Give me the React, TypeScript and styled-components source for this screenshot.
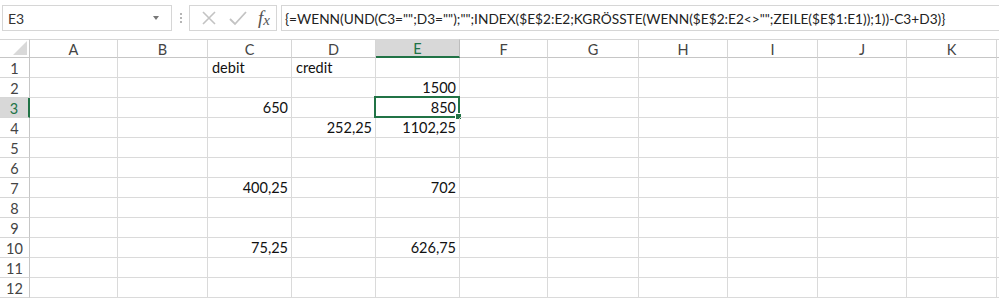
import React from 'react';
import styled, { createGlobalStyle, css } from 'styled-components';

const GlobalStyle = createGlobalStyle`
  html, body {
    margin: 0;
    padding: 0;
    background: #ffffff;
  }
  body {
    font-family: Lato, 'Open Sans', sans-serif;
    color: #222;
  }
`;

const COLS = ['A', 'B', 'C', 'D', 'E', 'F', 'G', 'H', 'I', 'J', 'K'];
const WIDTHS = [88, 90, 84, 84, 84, 88, 91, 89, 90, 89, 90];
const ROWS = 12;

// cell contents by row/column
const DATA: Record<string, { text: string; align: 'left' | 'right' }> = {
  '1C': { text: 'debit', align: 'left' },
  '1D': { text: 'credit', align: 'left' },
  '2E': { text: '1500', align: 'right' },
  '3C': { text: '650', align: 'right' },
  '3E': { text: '850', align: 'right' },
  '4D': { text: '252,25', align: 'right' },
  '4E': { text: '1102,25', align: 'right' },
  '7C': { text: '400,25', align: 'right' },
  '7E': { text: '702', align: 'right' },
  '10C': { text: '75,25', align: 'right' },
  '10E': { text: '626,75', align: 'right' },
};

const FORMULA =
  '{=WENN(UND(C3="";D3="");"";INDEX($E$2:E2;KGRÖSSTE(WENN($E$2:E2<>"";ZEILE($E$1:E1));1))-C3+D3)}';

const App: React.FC = () => {
  return (
    <>
      <GlobalStyle />
      <Page>
        <Toolbar>
          <NameBox>
            <span>E3</span>
            <DropArrow />
          </NameBox>
          <Dots>
            <i />
            <i />
            <i />
          </Dots>
          <ActionBox>
            <svg width="18" height="18" viewBox="0 0 18 18">
              <path d="M3 3 L15 15 M15 3 L3 15" stroke="#c3c3c3" strokeWidth="1.6" fill="none" />
            </svg>
            <svg width="20" height="18" viewBox="0 0 20 18">
              <path d="M2 10 L7 15 L18 3" stroke="#c3c3c3" strokeWidth="1.8" fill="none" />
            </svg>
            <Fx>
              f<sub>x</sub>
            </Fx>
          </ActionBox>
          <FormulaBox>{FORMULA}</FormulaBox>
        </Toolbar>

        <Sheet>
          <Corner>
            <svg width="14" height="14" viewBox="0 0 14 14">
              <polygon points="14,0 14,14 0,14" fill="#d9d9d9" />
            </svg>
          </Corner>
          {COLS.map((c) => (
            <ColHeader key={c} $selected={c === 'E'}>
              {c}
            </ColHeader>
          ))}
          <Filler $header />
          {Array.from({ length: ROWS }, (_, i) => i + 1).map((r) => (
            <React.Fragment key={r}>
              <RowHeader $selected={r === 3}>{r}</RowHeader>
              {COLS.map((c) => {
                const d = DATA[`${r}${c}`];
                const active = r === 3 && c === 'E';
                return (
                  <Cell key={c} $align={d?.align || 'left'}>
                    {d?.text}
                    {active && (
                      <Selection>
                        <Handle />
                      </Selection>
                    )}
                  </Cell>
                );
              })}
              <Filler />
            </React.Fragment>
          ))}
        </Sheet>
      </Page>
    </>
  );
};

const Page = styled.div`
  width: 999px;
  height: 300px;
  overflow: hidden;
  background: #ffffff;
`;

const Toolbar = styled.div`
  height: 39px;
  display: flex;
  align-items: flex-start;
  padding-top: 5px;
  box-sizing: border-box;
`;

const NameBox = styled.div`
  width: 170px;
  height: 26px;
  margin-left: 2px;
  border: 1px solid #d6d6d6;
  box-sizing: border-box;
  display: flex;
  align-items: center;
  justify-content: space-between;
  padding: 0 12px 0 5px;
  font-size: 14px;
  color: #333;
`;

const DropArrow = styled.span`
  width: 0;
  height: 0;
  border-left: 3px solid transparent;
  border-right: 3px solid transparent;
  border-top: 4px solid #777;
`;

const Dots = styled.div`
  width: 17px;
  display: flex;
  flex-direction: column;
  align-items: center;
  justify-content: center;
  gap: 2px;
  height: 26px;

  i {
    width: 2px;
    height: 2px;
    background: #b5b5b5;
  }
`;

const ActionBox = styled.div`
  width: 88px;
  height: 26px;
  border: 1px solid #d6d6d6;
  box-sizing: border-box;
  display: flex;
  align-items: center;
  justify-content: space-between;
  padding: 0 6px 0 10px;
`;

const Fx = styled.span`
  font-family: 'Liberation Serif', 'DejaVu Serif', serif;
  font-style: italic;
  font-size: 19px;
  color: #555;
  line-height: 1;

  sub {
    font-size: 15px;
    vertical-align: -1px;
  }
`;

const FormulaBox = styled.div`
  flex: 1;
  height: 26px;
  margin-left: 4px;
  border: 1px solid #d6d6d6;
  border-right: none;
  box-sizing: border-box;
  display: flex;
  align-items: center;
  padding-left: 3px;
  font-size: 13.7px;
  color: #222;
  white-space: nowrap;
  overflow: hidden;
`;

const Sheet = styled.div`
  display: grid;
  grid-template-columns: 30px ${WIDTHS.map((w) => `${w}px`).join(' ')} 1fr;
  grid-template-rows: 19px;
  grid-auto-rows: 20px;
  font-size: 14.5px;
`;

const headerBase = css`
  box-sizing: border-box;
  display: flex;
  align-items: center;
  justify-content: center;
  color: #444;
  background: #ffffff;
`;

const Corner = styled.div`
  ${headerBase};
  border-right: 1px solid #c6c6c6;
  border-bottom: 1px solid #c6c6c6;
  border-top: 1px solid #d6d6d6;
  justify-content: flex-end;
  align-items: flex-end;
  padding: 0 2px 2px 0;
`;

const ColHeader = styled.div<{ $selected?: boolean }>`
  ${headerBase};
  border-top: 1px solid #d6d6d6;
  border-right: 1px solid #d6d6d6;
  border-bottom: 1px solid #c6c6c6;
  padding-top: 1px;
  ${(p) =>
    p.$selected &&
    css`
      background: #d8d8d8;
      color: #217346;
      border-bottom: 2px solid #217346;
      border-right-color: #bdbdbd;
    `}
`;

const RowHeader = styled.div<{ $selected?: boolean }>`
  ${headerBase};
  border-right: 1px solid #c6c6c6;
  border-bottom: 1px solid #d6d6d6;
  padding-top: 2px;
  ${(p) =>
    p.$selected &&
    css`
      background: #d8d8d8;
      color: #217346;
      border-right: 2px solid #217346;
    `}
`;

const Cell = styled.div<{ $align: 'left' | 'right' }>`
  position: relative;
  box-sizing: border-box;
  border-right: 1px solid #dadada;
  border-bottom: 1px solid #dadada;
  display: flex;
  align-items: flex-end;
  justify-content: ${(p) => (p.$align === 'right' ? 'flex-end' : 'flex-start')};
  padding: 0 3px 0 4px;
  line-height: 18px;
  color: #111;
  white-space: nowrap;
`;

const Filler = styled.div<{ $header?: boolean }>`
  border-bottom: 1px solid ${(p) => (p.$header ? '#c6c6c6' : '#dadada')};
  border-top: ${(p) => (p.$header ? '1px solid #d6d6d6' : 'none')};
  box-sizing: border-box;
`;

const Selection = styled.div`
  position: absolute;
  left: -2px;
  top: -2px;
  right: -1px;
  bottom: -1px;
  border: 2px solid #217346;
  pointer-events: none;
`;

const Handle = styled.div`
  position: absolute;
  right: -4px;
  bottom: -4px;
  width: 5px;
  height: 5px;
  background: #217346;
  border: 1px solid #ffffff;
`;

export default App;
